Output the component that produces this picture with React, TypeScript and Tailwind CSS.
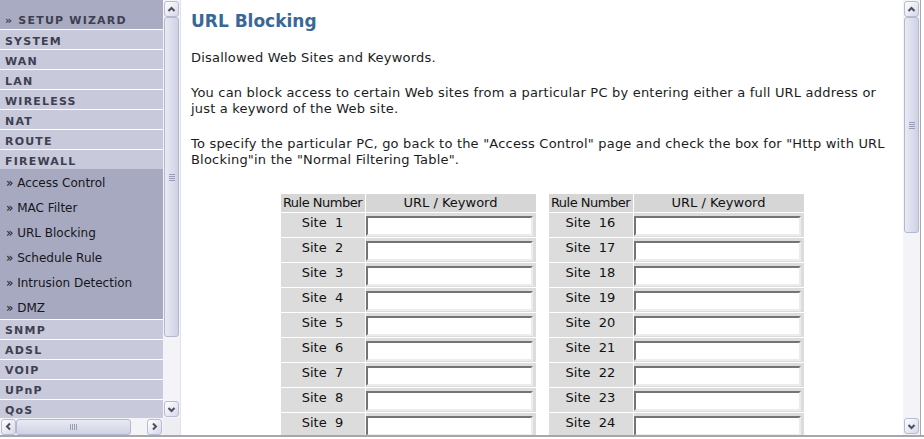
import React from "react";

const topMenu = ["SYSTEM", "WAN", "LAN", "WIRELESS", "NAT", "ROUTE"];
const subMenu = ["Access Control", "MAC Filter", "URL Blocking", "Schedule Rule", "Intrusion Detection", "DMZ"];
const lowMenu = ["SNMP", "ADSL", "VOIP", "UPnP", "QoS"];

const left = [1, 2, 3, 4, 5, 6, 7, 8, 9];
const right = [16, 17, 18, 19, 20, 21, 22, 23, 24];

function Arrow({ dir }: { dir: "up" | "down" | "left" | "right" }) {
  const d = {
    up: "M1.5 6 L4.5 3 L7.5 6",
    down: "M1.5 3 L4.5 6 L7.5 3",
    left: "M6 1.5 L3 4.5 L6 7.5",
    right: "M3 1.5 L6 4.5 L3 7.5",
  }[dir];
  return (
    <svg width="9" height="9" viewBox="0 0 9 9">
      <path d={d} fill="none" stroke="#4a4d63" strokeWidth="2" />
    </svg>
  );
}

function Btn({ dir }: { dir: "up" | "down" | "left" | "right" }) {
  return (
    <div className="flex h-[16px] w-[15px] shrink-0 items-center justify-center rounded-[3px] border border-[#b7bbd3] bg-linear-to-br from-[#ffffff] to-[#d6d8e8]">
      <Arrow dir={dir} />
    </div>
  );
}

function VGrip() {
  return (
    <div className="flex flex-col gap-[1px]">
      <div className="h-px w-[6px] bg-[#9a9db8]" />
      <div className="h-px w-[6px] bg-[#9a9db8]" />
      <div className="h-px w-[6px] bg-[#9a9db8]" />
      <div className="h-px w-[6px] bg-[#9a9db8]" />
    </div>
  );
}

function HGrip() {
  return (
    <div className="flex gap-[1px]">
      <div className="h-[6px] w-px bg-[#9a9db8]" />
      <div className="h-[6px] w-px bg-[#9a9db8]" />
      <div className="h-[6px] w-px bg-[#9a9db8]" />
      <div className="h-[6px] w-px bg-[#9a9db8]" />
    </div>
  );
}

function VScroll({ thumb }: { thumb: string }) {
  return (
    <div className="flex w-[17px] shrink-0 flex-col items-center bg-[#f3f3f8] py-px">
      <Btn dir="up" />
      <div className={`${thumb} flex w-[15px] items-center justify-center rounded-[3px] border border-[#b3b7cf] bg-linear-to-r from-[#e9eaf3] to-[#cfd2e4]`}>
        <VGrip />
      </div>
      <div className="flex-1" />
      <Btn dir="down" />
    </div>
  );
}

function SiteTable({ rows }: { rows: number[] }) {
  return (
    <table className="border-separate border-spacing-[1px] text-[13px] text-[#111]">
      <thead>
        <tr>
          <th className="h-[18px] w-[84px] bg-[#d6d6d6] p-0 text-center font-normal leading-[18px] tracking-[-0.5px] whitespace-nowrap">Rule Number</th>
          <th className="h-[18px] w-[170px] bg-[#d6d6d6] p-0 text-center font-normal leading-[18px]">URL / Keyword</th>
        </tr>
      </thead>
      <tbody>
        {rows.map((n) => (
          <tr key={n}>
            <td className="h-[24px] bg-[#dcdcdc] p-0 pb-[4px] text-center whitespace-pre">{`Site  ${n}`}</td>
            <td className="h-[24px] bg-[#dcdcdc] p-0 pt-[3px] align-top">
              <input
                type="text"
                className="block h-[20px] w-[167px] border-2 border-t-[#747474] border-l-[#747474] border-r-[#ececec] border-b-[#ececec] bg-white outline-none"
              />
            </td>
          </tr>
        ))}
      </tbody>
    </table>
  );
}

export default function App() {
  return (
    <div className="h-[439px] w-[924px] overflow-hidden bg-white font-['DejaVu_Sans',Verdana,sans-serif]">
      <div className="flex h-[435px]">
        {/* menu frame */}
        <div className="flex w-[180px] shrink-0 flex-col">
          <div className="flex h-[418px]">
            <div className="w-[163px] overflow-hidden bg-[#c8c9db] text-[#3e3f50]">
              <div className="h-[30px] border-b border-white bg-[#a9abc3] pt-[12px] pl-[5px] text-[11px] leading-[17px] font-bold tracking-[1.2px] whitespace-nowrap">
                » SETUP WIZARD
              </div>
              {topMenu.map((m) => (
                <div key={m} className="h-[20px] border-b border-white pt-[4px] pl-[5px] text-[11px] leading-[15px] font-bold tracking-[1.2px]">
                  {m}
                </div>
              ))}
              <div className="h-[19px] pt-[4px] pl-[5px] text-[11px] leading-[15px] font-bold tracking-[1.2px]">FIREWALL</div>
              <div className="bg-[#a7a9c0] text-[#15151c]">
                {subMenu.map((s) => (
                  <div key={s} className="h-[25px] pt-[5px] pl-[6px] text-[12px] leading-[19px] whitespace-nowrap">
                    » {s}
                  </div>
                ))}
              </div>
              {lowMenu.map((m) => (
                <div key={m} className="h-[20px] border-t border-white pt-[3px] pl-[5px] text-[11px] leading-[15px] font-bold tracking-[1.2px]">
                  {m}
                </div>
              ))}
            </div>
            <VScroll thumb="h-[320px]" />
          </div>
          <div className="flex h-[17px]">
            <div className="flex w-[163px] items-center bg-[#f3f3f8] px-px">
              <Btn dir="left" />
              <div className="flex h-[16px] w-[115px] items-center justify-center rounded-[3px] border border-[#b3b7cf] bg-linear-to-b from-[#e9eaf3] to-[#cfd2e4]">
                <HGrip />
              </div>
              <div className="flex-1" />
              <Btn dir="right" />
            </div>
            <div className="w-[17px] bg-[#ededf2]" />
          </div>
        </div>
        <div className="w-px bg-[#e2e2e8]" />

        {/* content frame */}
        <div className="w-[722px] shrink-0 overflow-hidden pt-[11px] pl-[10px] text-[13px] tracking-[0.2px] text-[#1c1c1c]">
          <h1 className="text-[17px] leading-[20px] font-bold tracking-normal text-[#3a6896]">URL Blocking</h1>
          <p className="mt-[19px] leading-[16px]">Disallowed Web Sites and Keywords.</p>
          <p className="mt-[19px] leading-[16px]">
            You can block access to certain Web sites from a particular PC by entering either a full URL address or
            <br />
            just a keyword of the Web site.
          </p>
          <p className="mt-[19px] leading-[16px]">
            To specify the particular PC, go back to the "Access Control" page and check the box for "Http with URL
            <br />
            Blocking"in the "Normal Filtering Table".
          </p>
          <div className="mt-[25px] -ml-[10px] flex justify-center gap-[11px] tracking-normal">
            <SiteTable rows={left} />
            <SiteTable rows={right} />
          </div>
        </div>
        <VScroll thumb="h-[216px]" />
        <div className="w-px bg-[#a9a9b0]" />
        <div className="flex-1 bg-white" />
      </div>
      <div className="h-[2px] bg-[#a6a6ad]" />
    </div>
  );
}
